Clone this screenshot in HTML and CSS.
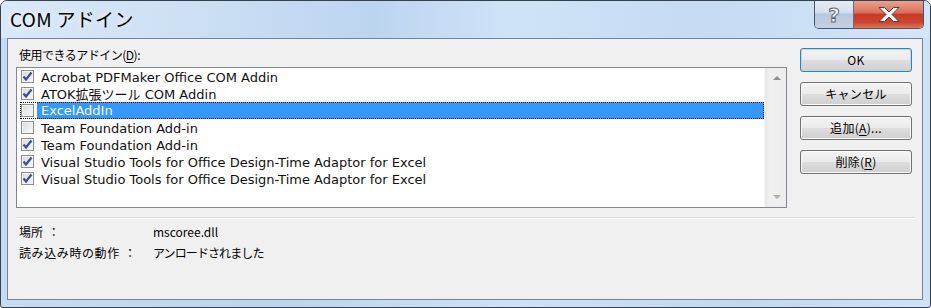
FILE: index.html
```html
<!DOCTYPE html>
<html lang="ja">
<head>
<meta charset="utf-8">
<title>COM アドイン</title>
<link rel="stylesheet" href="styles.css">
</head>
<body>
<div class="window">
  <div class="titlebar">
    <div class="title">COM アドイン</div>
    <div class="caption-btns">
      <div class="cap help"><span class="qmark">?</span></div>
      <div class="cap close">
        <svg width="26" height="17" viewBox="0 0 26 17"><path d="M3 1.5 L8.5 1.5 L13 6 L17.5 1.5 L23 1.5 L16 8.5 L23 15.5 L17.5 15.5 L13 11 L8.5 15.5 L3 15.5 L10 8.5 Z" fill="#ffffff" stroke="#5a3a36" stroke-width="1" stroke-linejoin="round"/></svg>
      </div>
    </div>
  </div>
  <div class="client">
    <div class="main">
      <div class="left">
        <div class="label">使用できるアドイン(<u>D</u>):</div>
        <div class="listbox">
          <div class="items">
            <div class="item"><span class="cb"><svg width="11" height="11" viewBox="0 0 11 11"><path d="M1.5 5.5 L4 8.5 L9.5 1.5" fill="none" stroke="#3b4f98" stroke-width="2.2"/></svg></span><span class="txt">Acrobat PDFMaker Office COM Addin</span></div>
            <div class="item"><span class="cb"><svg width="11" height="11" viewBox="0 0 11 11"><path d="M1.5 5.5 L4 8.5 L9.5 1.5" fill="none" stroke="#3b4f98" stroke-width="2.2"/></svg></span><span class="txt">ATOK拡張ツール COM Addin</span></div>
            <div class="item selected"><span class="cb"></span><span class="txt">ExcelAddIn</span></div>
            <div class="item"><span class="cb"></span><span class="txt">Team Foundation Add-in</span></div>
            <div class="item"><span class="cb"><svg width="11" height="11" viewBox="0 0 11 11"><path d="M1.5 5.5 L4 8.5 L9.5 1.5" fill="none" stroke="#3b4f98" stroke-width="2.2"/></svg></span><span class="txt">Team Foundation Add-in</span></div>
            <div class="item"><span class="cb"><svg width="11" height="11" viewBox="0 0 11 11"><path d="M1.5 5.5 L4 8.5 L9.5 1.5" fill="none" stroke="#3b4f98" stroke-width="2.2"/></svg></span><span class="txt">Visual Studio Tools for Office Design-Time Adaptor for Excel</span></div>
            <div class="item"><span class="cb"><svg width="11" height="11" viewBox="0 0 11 11"><path d="M1.5 5.5 L4 8.5 L9.5 1.5" fill="none" stroke="#3b4f98" stroke-width="2.2"/></svg></span><span class="txt">Visual Studio Tools for Office Design-Time Adaptor for Excel</span></div>
          </div>
          <div class="scrollbar"><span class="arrow up"></span><span class="arrow down"></span></div>
        </div>
      </div>
      <div class="buttons">
        <div class="btn default">OK</div>
        <div class="btn">キャンセル</div>
        <div class="btn">追加(<u>A</u>)...</div>
        <div class="btn">削除(<u>R</u>)</div>
      </div>
    </div>
    <div class="sep"></div>
    <div class="info">
      <div class="irow"><span class="ilabel">場所 <span class="colon">：</span></span><span class="ival">mscoree.dll</span></div>
      <div class="irow"><span class="ilabel wide">読み込み時の動作 <span class="colon">：</span></span><span class="ival kana">アンロードされました</span></div>
    </div>
  </div>
</div>
</body>
</html>
```
FILE: styles.css
```css
* { box-sizing: border-box; }
html, body {
  margin: 0;
  padding: 0;
  background: #ffffff;
}
body {
  font-family: "Noto Sans CJK JP", "Noto Sans", sans-serif;
  font-size: 12px;
  color: #000;
}
.window {
  width: 931px;
  height: 308px;
  border: 1px solid #34414f;
  border-radius: 7px 7px 3px 3px;
  background: linear-gradient(90deg, #c7dcf2 0%, #bcd4ef 30%, #cde2f8 55%, #c2d8f1 80%, #cfe3f8 100%);
  display: flex;
  flex-direction: column;
  overflow: hidden;
}
.titlebar {
  height: 37px;
  flex: none;
  display: flex;
  align-items: flex-start;
  background: linear-gradient(90deg, #dae9f8 0%, #c9ddf3 25%, #bcd5ef 40%, #cfe3f8 55%, #c5dbf2 75%, #d2e5f9 100%);
}
.title {
  font-size: 19px;
  line-height: 22px;
  letter-spacing: 0.3px;
  padding: 7px 0 0 9px;
  color: #000;
  text-shadow: 0 0 6px rgba(255,255,255,0.9);
}
.caption-btns {
  margin-left: auto;
  margin-right: 6px;
  margin-top: -1px;
  display: flex;
  height: 29px;
  border: 1px solid #45556a;
  border-top: none;
  border-radius: 0 0 5px 5px;
  overflow: hidden;
}
.cap {
  height: 100%;
  display: flex;
  align-items: center;
  justify-content: center;
}
.help {
  width: 39px;
  border-right: 1px solid #5f6f83;
  background: linear-gradient(180deg, #e6edf6 0%, #d4dfec 45%, #b8c8db 50%, #c3d1e1 100%);
}
.qmark {
  font-family: "DejaVu Sans", sans-serif;
  font-weight: bold;
  font-size: 20px;
  color: #ffffff;
  -webkit-text-stroke: 1px #5d6670;
  line-height: 1;
  margin-top: 1px;
}
.close {
  width: 69px;
  background: linear-gradient(180deg, #eaa796 0%, #db6f59 45%, #c73b26 52%, #cc4530 80%, #e2765a 100%);
}
.client {
  flex: 1;
  margin: 0 7px 7px 6px;
  border: 1px solid #72849a;
  background: #f0f0f0;
  padding: 7px 10px 0 8px;
  display: flex;
  flex-direction: column;
}
.main {
  display: flex;
  gap: 13px;
}
.left {
  flex: 1;
  display: flex;
  flex-direction: column;
}
.label {
  height: 17px;
  line-height: 17px;
  padding-left: 3px;
  margin-bottom: 4px;
  letter-spacing: -0.5px;
}
u { text-decoration: underline; text-underline-offset: 2px; }
.listbox {
  height: 141px;
  border: 1px solid #828790;
  background: #ffffff;
  display: flex;
}
.items {
  flex: 1;
  padding-left: 3px;
}
.item {
  height: 17px;
  display: flex;
  align-items: center;
}
.cb {
  width: 13px;
  height: 13px;
  margin-left: 1px;
  border: 1px solid #8e8f8f;
  background: linear-gradient(135deg, #d6d9de 0%, #eceef0 60%, #f8f8f8 100%);
  box-shadow: inset 0 0 0 1px #f4f4f4;
  display: flex;
  align-items: center;
  justify-content: center;
  flex: none;
}
.cb svg { display: block; }
.txt {
  margin-left: 3px;
  padding-left: 4px;
  padding-top: 2px;
  height: 17px;
  line-height: 15px;
  white-space: nowrap;
  font-family: "DejaVu Sans", "Noto Sans CJK JP", sans-serif;
  font-size: 13px;
  color: #111;
}
.item.selected {
  outline: 1px dotted #000;
  outline-offset: -1px;
}
.item.selected .txt {
  flex: 1;
  background: #3399ff;
  color: #ffffff;
  border-top: 1px dotted #cc7733;
  border-bottom: 1px dotted #cc7733;
  border-right: 1px dotted #cc7733;
  padding-top: 1px;
  line-height: 14px;
}
.scrollbar {
  width: 22px;
  flex: none;
  background: linear-gradient(90deg, #e6e6e6 0%, #f0f0f0 20%, #ededed 100%);
  border-left: 1px solid #f7f7f7;
  display: flex;
  flex-direction: column;
  justify-content: space-between;
  align-items: center;
  padding: 8px 0 8px 2px;
}
.arrow {
  width: 0;
  height: 0;
  border-left: 4px solid transparent;
  border-right: 4px solid transparent;
}
.arrow.up { border-bottom: 4px solid #8e8e8e; }
.arrow.down { border-top: 4px solid #b0b0b0; }
.buttons {
  width: 112px;
  flex: none;
  display: flex;
  flex-direction: column;
  gap: 10px;
  margin-top: 2px;
}
.btn {
  height: 24px;
  border: 1px solid #707070;
  border-radius: 3px;
  background: linear-gradient(180deg, #f3f3f3 0%, #ebebeb 48%, #dddddd 52%, #cfcfcf 100%);
  box-shadow: inset 0 0 0 1px #fbfbfb;
  text-align: center;
  line-height: 22px;
  letter-spacing: 0.3px;
}
.btn.default {
  border-color: #3c7fb1;
  box-shadow: inset 0 0 0 1px #a9ddf5;
}
.sep {
  margin-top: 9px;
  margin-right: -2px;
  height: 2px;
  border-top: 1px solid #d9dde2;
  border-bottom: 1px solid #fcfcfc;
}
.info {
  padding-top: 2px;
  padding-left: 3px;
}
.irow {
  height: 21px;
  line-height: 21px;
  display: flex;
}
.ilabel {
  width: 134px;
  flex: none;
}
.ilabel .colon {
  margin-left: 2px;
}
.ilabel.wide {
  letter-spacing: 0.6px;
}
.ilabel.wide .colon {
  margin-left: 1px;
}
.ival.kana {
  letter-spacing: -0.9px;
}
```
